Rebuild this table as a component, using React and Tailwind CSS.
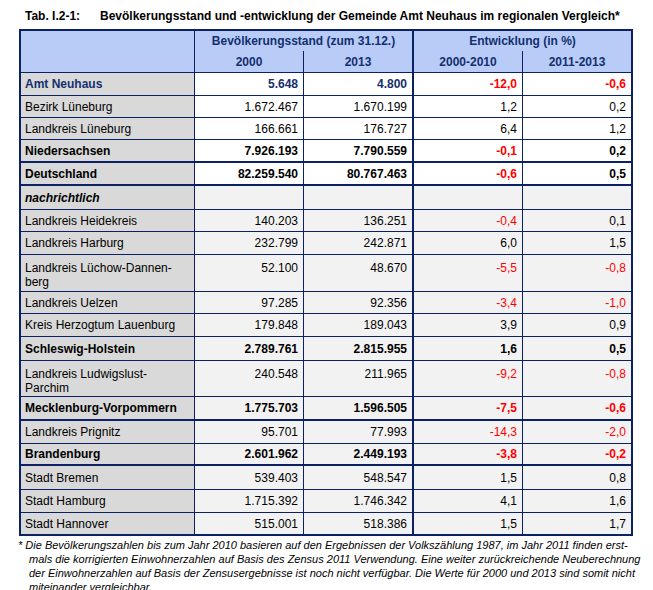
import React from "react";

const rows = [
  { label: "Amt Neuhaus", v: ["5.648", "4.800", "-12,0", "-0,6"], h: "h-[23px]", bold: true, navy: true, white: true },
  { label: "Bezirk Lüneburg", v: ["1.672.467", "1.670.199", "1,2", "0,2"], h: "h-[22px]", white: true },
  { label: "Landkreis Lüneburg", v: ["166.661", "176.727", "6,4", "1,2"], h: "h-[22px]", white: true },
  { label: "Niedersachsen", v: ["7.926.193", "7.790.559", "-0,1", "0,2"], h: "h-[23px]", bold: true, white: true, thick: true },
  { label: "Deutschland", v: ["82.259.540", "80.767.463", "-0,6", "0,5"], h: "h-[23px]", bold: true, white: true, thick: true },
  { label: "nachrichtlich", v: ["", "", "", ""], h: "h-[24px]", bold: true, italic: true },
  { label: "Landkreis Heidekreis", v: ["140.203", "136.251", "-0,4", "0,1"], h: "h-[22px]" },
  { label: "Landkreis Harburg", v: ["232.799", "242.871", "6,0", "1,5"], h: "h-[23px]" },
  { label: ["Landkreis Lüchow-Dannen-", "berg"], v: ["52.100", "48.670", "-5,5", "-0,8"], h: "h-[37px]", double: true },
  { label: "Landkreis Uelzen", v: ["97.285", "92.356", "-3,4", "-1,0"], h: "h-[22px]" },
  { label: "Kreis Herzogtum Lauenburg", v: ["179.848", "189.043", "3,9", "0,9"], h: "h-[23px]" },
  { label: "Schleswig-Holstein", v: ["2.789.761", "2.815.955", "1,6", "0,5"], h: "h-[24px]", bold: true },
  { label: ["Landkreis Ludwigslust-", "Parchim"], v: ["240.548", "211.965", "-9,2", "-0,8"], h: "h-[36px]", double: true },
  { label: "Mecklenburg-Vorpommern", v: ["1.775.703", "1.596.505", "-7,5", "-0,6"], h: "h-[24px]", bold: true, thick: true },
  { label: "Landkreis Prignitz", v: ["95.701", "77.993", "-14,3", "-2,0"], h: "h-[23px]" },
  { label: "Brandenburg", v: ["2.601.962", "2.449.193", "-3,8", "-0,2"], h: "h-[22px]", bold: true, thick: true },
  { label: "Stadt Bremen", v: ["539.403", "548.547", "1,5", "0,8"], h: "h-[24px]" },
  { label: "Stadt Hamburg", v: ["1.715.392", "1.746.342", "4,1", "1,6"], h: "h-[23px]" },
  { label: "Stadt Hannover", v: ["515.001", "518.386", "1,5", "1,7"], h: "h-[21px]", last: true },
];

const colW = ["w-[109px] border-r", "w-[110px] border-r-2", "w-[109px] border-r", "w-[108px]"];

function Row({ r }) {
  const border = r.last ? "" : r.thick ? "border-b-2" : "border-b";
  const bg = r.white ? "bg-white" : "bg-[#f2f2f2]";
  const weight = r.bold ? "font-bold" : "font-normal";
  const align = r.double ? "items-start pt-[6px]" : "items-center";
  return (
    <div className={`flex ${r.h} ${border} border-[#0b2163]`}>
      <div
        className={`w-[174px] shrink-0 flex ${align} border-r border-[#0b2163] bg-[#d9d9d9] pl-[4px] ${weight} ${
          r.italic ? "italic" : ""
        } ${r.navy ? "text-[#142f6e]" : "text-black"}`}
      >
        {Array.isArray(r.label) ? (
          <div>
            {r.label[0]}
            <br />
            {r.label[1]}
          </div>
        ) : (
          r.label
        )}
      </div>
      {r.v.map((val, i) => {
        const neg = val.startsWith("-");
        const color = neg ? "text-[#ff0000]" : r.navy ? "text-[#142f6e]" : "text-black";
        return (
          <div
            key={i}
            className={`${colW[i]} shrink-0 flex ${align} justify-end pr-[5px] border-[#0b2163] ${bg} ${weight} ${color}`}
          >
            {val}
          </div>
        );
      })}
    </div>
  );
}

export default function App() {
  return (
    <div
      className="w-[653px] h-[590px] overflow-hidden bg-white text-[12px] leading-[14px] text-black"
      style={{ fontFamily: '"Liberation Sans", Arial, sans-serif' }}
    >
      <div className="flex pt-[9px] pl-[25px] h-[29px] font-bold text-[12px] leading-[14px]">
        <span className="w-[75px] shrink-0">Tab. I.2-1:</span>
        <span className="whitespace-nowrap">
          Bevölkerungsstand und -entwicklung der Gemeinde Amt Neuhaus im regionalen Vergleich*
        </span>
      </div>

      <div className="ml-[19px] w-[614px] border-2 border-[#0b2163]">
        <div className="flex h-[42px] border-b border-[#0b2163] bg-[#b8ccf7] font-bold text-[#142f6e]">
          <div className="w-[174px] shrink-0 border-r border-[#0b2163]" />
          <div className="w-[219px] shrink-0 flex flex-col border-r-2 border-[#0b2163]">
            <div className="h-[20px] flex items-center justify-center">Bevölkerungsstand (zum 31.12.)</div>
            <div className="flex flex-1">
              <div className="w-[109px] border-r border-[#0b2163] flex items-center justify-center">2000</div>
              <div className="flex-1 flex items-center justify-center">2013</div>
            </div>
          </div>
          <div className="w-[217px] shrink-0 flex flex-col">
            <div className="h-[20px] flex items-center justify-center">Entwicklung (in %)</div>
            <div className="flex flex-1">
              <div className="w-[109px] border-r border-[#0b2163] flex items-center justify-center">2000-2010</div>
              <div className="flex-1 flex items-center justify-center">2011-2013</div>
            </div>
          </div>
        </div>
        {rows.map((r, i) => (
          <Row key={i} r={r} />
        ))}
      </div>

      <div className="mt-[2px] pl-[29px] text-[11px] leading-[14px] italic text-black whitespace-nowrap">
        <div className="-ml-[11px]">
          * Die Bevölkerungszahlen bis zum Jahr 2010 basieren auf den Ergebnissen der Volkszählung 1987, im Jahr 2011 finden erst-
        </div>
        <div>
          mals die korrigierten Einwohnerzahlen auf Basis des Zensus 2011 Verwendung. Eine weiter zurückreichende Neuberechnung
        </div>
        <div>
          der Einwohnerzahlen auf Basis der Zensusergebnisse ist noch nicht verfügbar. Die Werte für 2000 und 2013 sind somit nicht
        </div>
        <div>miteinander vergleichbar.</div>
      </div>
    </div>
  );
}
